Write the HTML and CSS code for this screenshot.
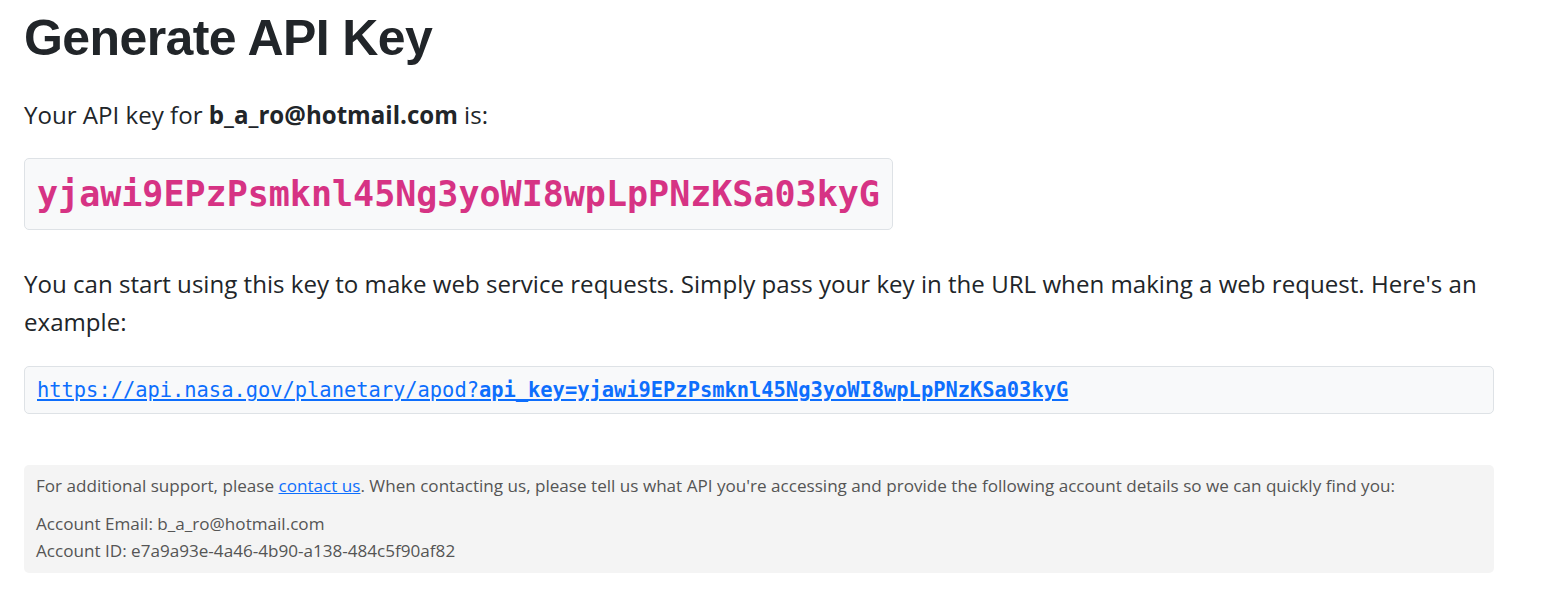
FILE: index.html
```html
<!DOCTYPE html>
<html lang="en">
<head>
<meta charset="utf-8">
<title>Generate API Key</title>
<link rel="stylesheet" href="styles.css">
</head>
<body>
<main class="page">
  <h1 class="title">Generate API Key</h1>
  <p class="lead lead-first">Your API key for <strong>b_a_ro@hotmail.com</strong> is:</p>
  <div class="key-box"><code class="key">yjawi9EPzPsmknl45Ng3yoWI8wpLpPNzKSa03kyG</code></div>
  <p class="lead lead-second">You can start using this key to make web service requests. Simply pass your key in the URL when making a web request. Here's an example:</p>
  <div class="url-box"><a class="url" href="#">https://api.nasa.gov/planetary/apod?<strong>api_key=yjawi9EPzPsmknl45Ng3yoWI8wpLpPNzKSa03kyG</strong></a></div>
  <div class="support">
    <p class="support-text">For additional support, please <a class="support-link" href="#">contact us</a>. When contacting us, please tell us what API you're accessing and provide the following account details so we can quickly find you:</p>
    <p class="support-details">Account Email: b_a_ro@hotmail.com<br>Account ID: e7a9a93e-4a46-4b90-a138-484c5f90af82</p>
  </div>
</main>
</body>
</html>
```

FILE: styles.css
```css
html, body {
  margin: 0;
  padding: 0;
  background: #ffffff;
}

body {
  font-family: "Open Sans", "Noto Sans", sans-serif;
  color: #212529;
}

.page {
  width: 1470px;
  padding: 0 0 0 24px;
  display: flex;
  flex-direction: column;
}

.title {
  font-family: "Liberation Sans", Arial, sans-serif;
  font-weight: 700;
  font-size: 50px;
  letter-spacing: -0.6px;
  line-height: 1.2;
  margin: 8px 0 0 0;
  color: #212529;
}

.lead {
  font-size: 24.1px;
  line-height: 38px;
  margin: 0;
}

.lead-first {
  margin-top: 28px;
}

.lead-second {
  margin-top: 35px;
}

.lead strong {
  font-weight: 700;
}

.key-box {
  align-self: flex-start;
  margin-top: 24px;
  padding: 0 12px;
  height: 72px;
  box-sizing: border-box;
  display: flex;
  align-items: center;
  background: #f8f9fa;
  border: 1px solid #dee2e6;
  border-radius: 5px;
}

.key {
  font-family: "DejaVu Sans Mono", monospace;
  font-weight: 700;
  font-size: 35px;
  color: #d63384;
}

.url-box {
  margin-top: 25px;
  height: 48px;
  box-sizing: border-box;
  padding: 0 12px;
  display: flex;
  align-items: center;
  background: #f8f9fa;
  border: 1px solid #dee2e6;
  border-radius: 5px;
}

.url {
  font-family: "DejaVu Sans Mono", monospace;
  font-size: 20.4px;
  color: #0d6efd;
  text-decoration: underline;
}

.url strong {
  font-weight: 700;
}

.support {
  margin-top: 51px;
  background: #f4f4f4;
  border-radius: 5px;
  padding: 9px 12px 9px 12px;
  color: #555555;
  font-size: 17.1px;
}

.support-text {
  margin: 0;
  line-height: 24px;
}

.support-link {
  color: #0d6efd;
  text-decoration: underline;
}

.support-details {
  margin: 12px 0 0 0;
  line-height: 27px;
}
```
